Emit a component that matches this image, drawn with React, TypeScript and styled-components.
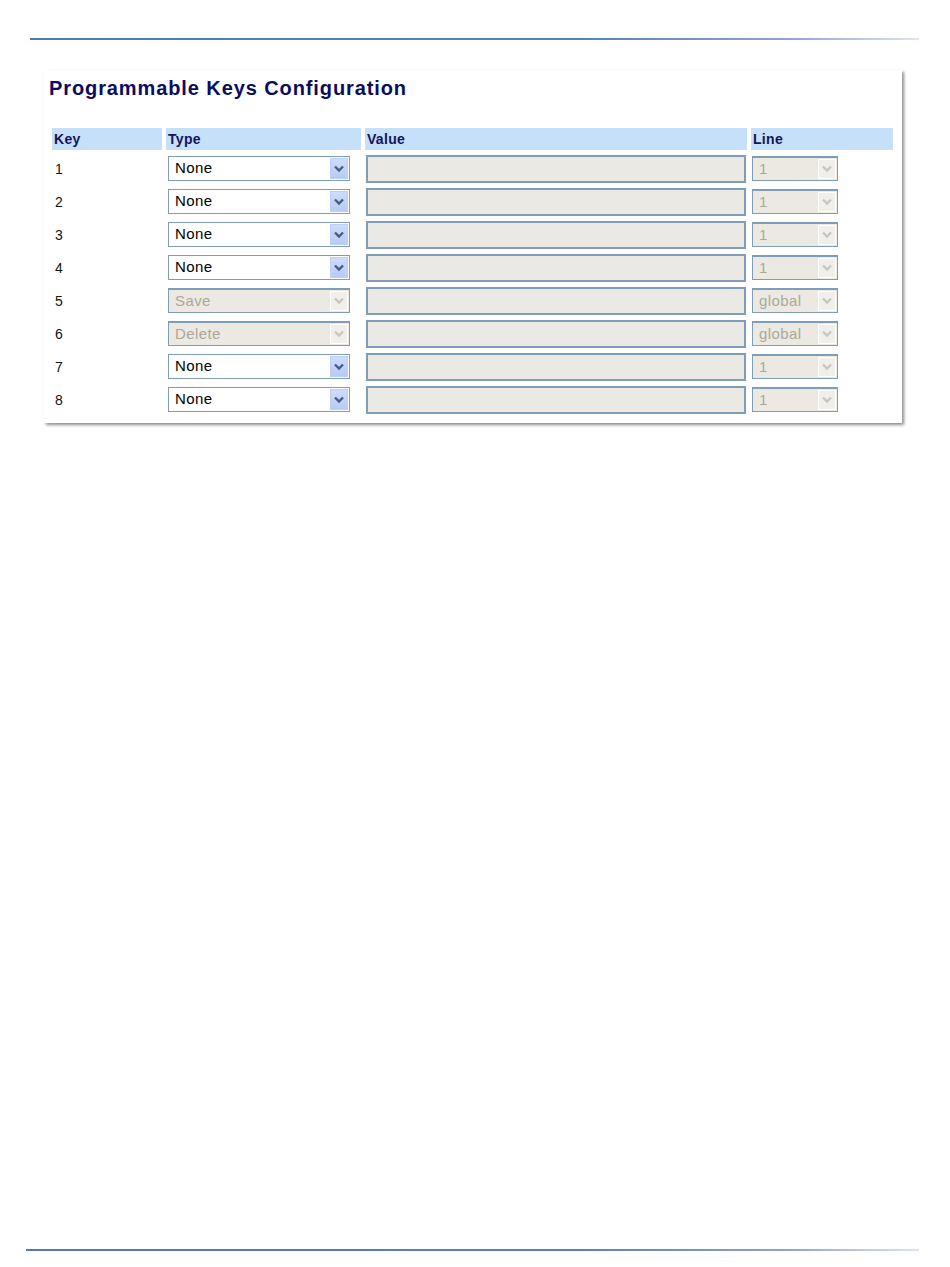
import styled, { createGlobalStyle } from "styled-components";

const GlobalStyle = createGlobalStyle`
    body {
        margin: 0;
        background: #ffffff;
        font-family: "Liberation Sans", Arial, sans-serif;
    }
`;

const Page = styled.div`
    min-height: 1267px;
    box-sizing: border-box;
    display: flex;
    flex-direction: column;
    padding: 38px 31px 16px 30px;
`;

const Rule = styled.div`
    height: 2px;
    background: linear-gradient(to right, #5679b2 0%, #5b80b6 62%, #8fa3cf 85%, #dfe2f1 100%);
`;

const BottomRule = styled(Rule)`
    margin-top: auto;
    margin-left: -4px;
`;

const Card = styled.div`
    margin: 30px 0 0 14px;
    width: 858px;
    box-sizing: border-box;
    padding: 6px 9px 7px 8px;
    background: #ffffff;
    box-shadow: 2px 2px 3px rgba(0, 0, 0, 0.45);
`;

const Title = styled.h1`
    margin: 0 0 28px -3px;
    font-size: 20px;
    line-height: 24px;
    font-weight: bold;
    letter-spacing: 0.9px;
    color: #0c0c5e;
`;

const Grid = styled.div`
    display: grid;
    grid-template-columns: 110px 195px 382px 142px;
    column-gap: 4px;
    grid-auto-rows: 33px;
    grid-template-rows: 24px;
`;

const HeadCell = styled.div`
    height: 22px;
    align-self: start;
    background: #c5e0f8;
    color: #14145c;
    font-size: 14px;
    font-weight: bold;
    line-height: 23px;
    padding-left: 2px;
    letter-spacing: 0.3px;
`;

const Cell = styled.div<{ $inset?: number }>`
    display: flex;
    align-items: center;
    padding-left: ${(p) => p.$inset ?? 0}px;
`;

const KeyNum = styled.span`
    font-size: 14px;
    color: #111111;
    padding-left: 3px;
`;

const SelectBox = styled.div<{ $w: number; $off?: boolean }>`
    position: relative;
    width: ${(p) => p.$w}px;
    height: 25px;
    box-sizing: border-box;
    border: 1px solid #7f9db9;
    border-top-width: ${(p) => (p.$off ? 2 : 1)}px;
    background: ${(p) => (p.$off ? "#ebe9e2" : "#ffffff")};
    color: ${(p) => (p.$off ? "#aca899" : "#000000")};
    font-size: 15px;
    letter-spacing: 0.4px;
    line-height: 22px;
    padding-left: 6px;
`;

const DropBtn = styled.div<{ $off?: boolean }>`
    position: absolute;
    top: 1px;
    right: 1px;
    bottom: 1px;
    width: 18px;
    box-sizing: border-box;
    display: flex;
    align-items: center;
    justify-content: center;
    border: 1px solid ${(p) => (p.$off ? "#ffffff" : "#bcd0f7")};
    background: ${(p) =>
        p.$off
            ? "#f1efea"
            : "linear-gradient(to bottom, #cddcfc 0%, #b7cbf5 100%)"};
    color: ${(p) => (p.$off ? "#c8c6be" : "#4a5c85")};
`;

const ValueInput = styled.div`
    width: 380px;
    height: 28px;
    box-sizing: border-box;
    border: 2px solid #7f9db9;
    background: #ebe9e3;
`;

type SelectProps = {
    width: number;
    value: string;
    disabled?: boolean;
};

function Select({ width, value, disabled }: SelectProps) {
    return (
        <SelectBox $w={width} $off={disabled}>
            {value}
            <DropBtn $off={disabled}>
                <svg width="10" height="8" viewBox="0 0 10 8">
                    <path d="M1 1.5 L5 5.5 L9 1.5" fill="none" stroke="currentColor" strokeWidth="2.4" />
                </svg>
            </DropBtn>
        </SelectBox>
    );
}

const rows = [
    { key: "1", type: "None", line: "1", fixed: false },
    { key: "2", type: "None", line: "1", fixed: false },
    { key: "3", type: "None", line: "1", fixed: false },
    { key: "4", type: "None", line: "1", fixed: false },
    { key: "5", type: "Save", line: "global", fixed: true },
    { key: "6", type: "Delete", line: "global", fixed: true },
    { key: "7", type: "None", line: "1", fixed: false },
    { key: "8", type: "None", line: "1", fixed: false },
];

export default function App() {
    return (
        <Page>
            <GlobalStyle />
            <Rule />
            <Card>
                <Title>Programmable Keys Configuration</Title>
                <Grid>
                    <HeadCell>Key</HeadCell>
                    <HeadCell>Type</HeadCell>
                    <HeadCell>Value</HeadCell>
                    <HeadCell>Line</HeadCell>
                    {rows.map((r) => (
                        <>
                            <Cell key={"k" + r.key}>
                                <KeyNum>{r.key}</KeyNum>
                            </Cell>
                            <Cell key={"t" + r.key} $inset={2}>
                                <Select width={182} value={r.type} disabled={r.fixed} />
                            </Cell>
                            <Cell key={"v" + r.key} $inset={1}>
                                <ValueInput />
                            </Cell>
                            <Cell key={"l" + r.key} $inset={1}>
                                <Select width={86} value={r.line} disabled />
                            </Cell>
                        </>
                    ))}
                </Grid>
            </Card>
            <BottomRule />
        </Page>
    );
}
